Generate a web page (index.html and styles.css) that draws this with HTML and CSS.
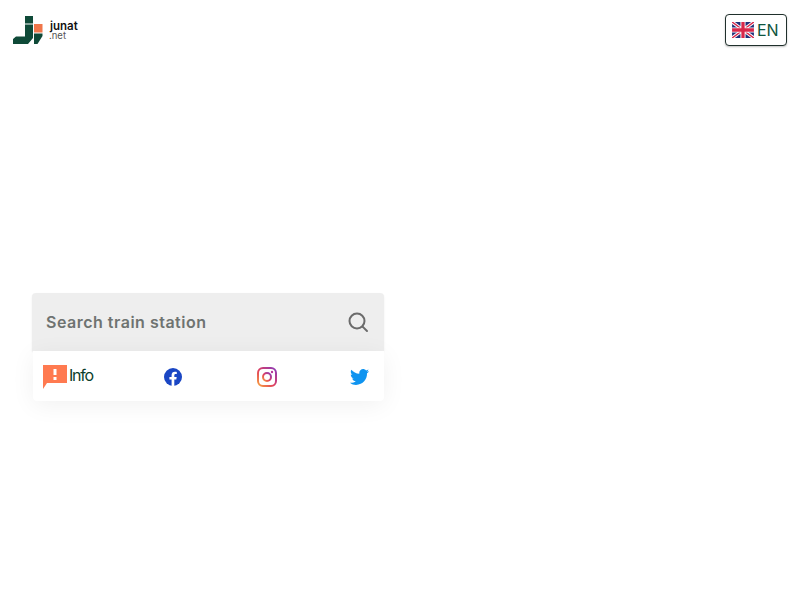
FILE: index.html
```html
<!DOCTYPE html>
<html lang="en">
<head>
<meta charset="utf-8">
<title>junat.net</title>
<link rel="stylesheet" href="styles.css">
</head>
<body>
<header class="topbar">
  <a class="logo" href="#">
    <svg class="logo-mark" width="30" height="28" viewBox="0 0 30 28">
      <rect fill="#0f4a38" x="12" y="0" width="8" height="7.500"/>
      <path fill="#0f4a38" d="M12 8.500h8V22l-5 6H0v-5l3-2.500h9z"/>
      <rect fill="#f0764a" x="21" y="8" width="8.500" height="8.500"/>
      <path fill="#0f4a38" d="M21 17.500h8.500v2.500l-5 8H21z"/>
    </svg>
    <span class="logo-text"><span class="logo-name">junat</span><span class="logo-tld">.net</span></span>
  </a>
  <button class="lang">
    <svg class="flag" width="22" height="16" viewBox="0 0 60 44">
      <rect width="60" height="44" fill="#1f2f78"/>
      <path d="M0 0L60 44M60 0L0 44" stroke="#fff" stroke-width="9"/>
      <path d="M0 0L60 44M60 0L0 44" stroke="#d8274a" stroke-width="4"/>
      <path d="M30 0V44M0 22H60" stroke="#fff" stroke-width="14"/>
      <path d="M30 0V44M0 22H60" stroke="#d8274a" stroke-width="9"/>
    </svg>
    <span>EN</span>
  </button>
</header>
<main class="main">
  <div class="widget">
    <div class="search">
      <span class="search-label">Search train station</span>
      <svg class="search-icon" width="22" height="22" viewBox="0 0 22 22" fill="none" stroke="#6b6b6b" stroke-width="2" stroke-linecap="round">
        <circle cx="10" cy="10" r="7.500"/>
        <path d="M15.600 15.600L20 20"/>
      </svg>
    </div>
    <nav class="links">
      <a class="info" href="#">
        <svg width="24" height="24" viewBox="0 0 24 24">
          <path fill="#ff7a50" d="M0 0h24v18H4l-4 6z"/>
          <rect fill="#fff" x="10.500" y="4" width="3" height="6"/>
          <rect fill="#fff" x="10.500" y="12" width="3" height="3"/>
        </svg>
        <span>Info</span>
      </a>
      <a class="social" href="#">
        <svg width="18" height="18" viewBox="0 0 18 18">
          <circle cx="9" cy="9" r="9" fill="#1a46c4"/>
          <path fill="#fff" d="M7.600 18v-6.400H5.400V9h2.200V7.100c0-2.200 1.300-3.400 3.300-3.400.9 0 1.900.2 1.900.2v2.100h-1.100c-1.100 0-1.400.7-1.400 1.300V9h2.400l-.4 2.600h-2V18z"/>
        </svg>
      </a>
      <a class="social social-ig" href="#">
        <svg width="20" height="20" viewBox="0 0 20 20" fill="none">
          <defs>
            <linearGradient id="ig" x1="0" y1="1" x2="1" y2="0">
              <stop offset="0" stop-color="#f9a03c"/>
              <stop offset="0.45" stop-color="#e0405f"/>
              <stop offset="1" stop-color="#8a3ab9"/>
            </linearGradient>
          </defs>
          <rect x="1" y="1" width="18" height="18" rx="5" stroke="url(#ig)" stroke-width="2"/>
          <circle cx="10" cy="10" r="4" stroke="url(#ig)" stroke-width="2"/>
          <circle cx="15" cy="5" r="1.200" fill="#b8379c"/>
        </svg>
      </a>
      <a class="social social-tw" href="#">
        <svg width="19" height="16" viewBox="0 0 24 20">
          <path fill="#0f94f0" d="M24 2.400c-.9.4-1.800.7-2.800.8 1-.6 1.800-1.600 2.200-2.700-1 .6-2 1-3.100 1.200C19.300.7 18 0 16.600 0c-2.700 0-4.900 2.200-4.900 4.900 0 .4 0 .8.100 1.100C7.700 5.800 4.100 3.900 1.700.9 1.200 1.600 1 2.500 1 3.400c0 1.700.9 3.200 2.200 4.100-.8 0-1.600-.2-2.200-.6v.1c0 2.400 1.700 4.400 3.900 4.800-.4.100-.8.200-1.300.2-.3 0-.6 0-.9-.1.600 2 2.400 3.400 4.600 3.400-1.700 1.300-3.800 2.100-6.100 2.100-.4 0-.8 0-1.200-.1C2.200 19.200 4.800 20 7.500 20c9.100 0 14-7.500 14-14v-.6c1-.7 1.800-1.600 2.500-3z"/>
        </svg>
      </a>
    </nav>
  </div>
</main>
</body>
</html>
```
FILE: styles.css
```css
* { box-sizing: border-box; }
html, body { margin: 0; height: 100%; }
body {
  width: 800px;
  height: 600px;
  overflow: hidden;
  background: #fff;
  font-family: Inter, "Liberation Sans", sans-serif;
}
a { text-decoration: none; color: inherit; }

.topbar {
  display: flex;
  justify-content: space-between;
  align-items: flex-start;
  padding: 14px 13px 0;
}
.logo { display: flex; align-items: flex-start; gap: 6px; padding-top: 2px; }
.logo-mark { display: block; }
.logo-text { display: flex; flex-direction: column; padding-top: 5px; color: #111; }
.logo-name { font-family: Inter, sans-serif; font-weight: 600; font-size: 11.500px; line-height: 11px; margin-left: 1px; }
.logo-tld { font-family: Inter, sans-serif; font-weight: 400; font-size: 9.500px; line-height: 8px; color: #555; }

.lang {
  display: flex;
  align-items: center;
  gap: 3px;
  width: 62px;
  height: 32px;
  padding: 0 0 0 6px;
  background: #fff;
  border: 1.500px solid #20302c;
  border-radius: 4px;
  box-shadow: 0 1px 2px rgba(0,0,0,.25);
  color: #0d5540;
  font-family: Inter, sans-serif;
  font-size: 16px;
}
.flag { display: block; }

.main { padding: 247px 0 0 32px; }
.widget { width: 352px; }
.search {
  display: flex;
  align-items: center;
  justify-content: space-between;
  height: 58px;
  padding: 0 15px 0 14px;
  background: #eee;
  border-radius: 4px 4px 0 0;
  box-shadow: 0 1px 2px rgba(0,0,0,.08);
}
.search-label { font-size: 16px; font-weight: 600; color: #6e7371; letter-spacing: .5px; }
.links {
  display: flex;
  align-items: center;
  height: 50px;
  margin-left: 1px;
  background: #fff;
  border-radius: 0 0 4px 4px;
  box-shadow: 0 4px 24px rgba(0,0,0,.06);
  padding: 2px 15px 0 10px;
}
.info { display: flex; align-items: flex-start; gap: 2px; margin-right: auto; color: #0b3d2c; font-size: 16px; letter-spacing: -1.200px; }
.info span { line-height: 20px; }
.info svg { display: block; }
.social { display: flex; }
.social-ig { margin-left: 75px; }
.social-tw { margin-left: 73px; }
.social svg { display: block; }
```
